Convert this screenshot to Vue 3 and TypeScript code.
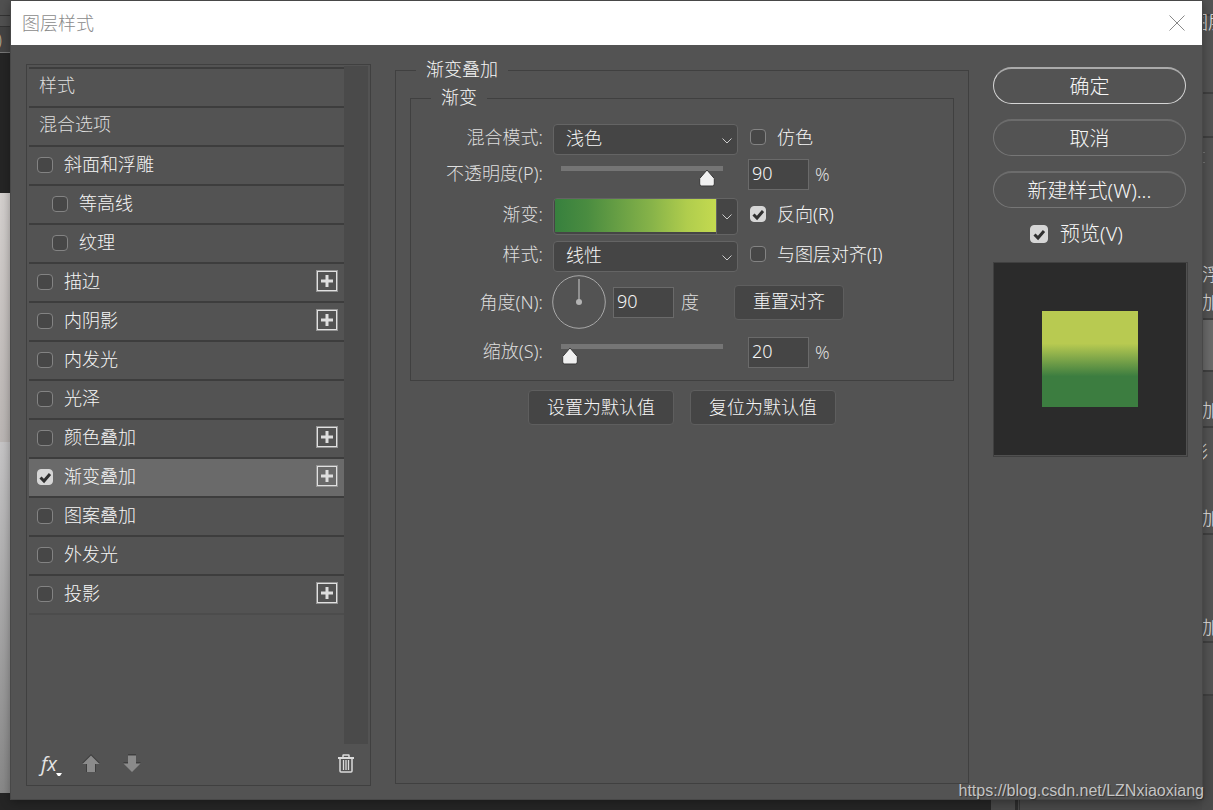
<script setup lang="ts">
import { ref } from 'vue'

interface Effect {
  name: string
  checked: boolean
  indent?: boolean
  addable?: boolean
  active?: boolean
}

const effects = ref<Effect[]>([
  { name: '斜面和浮雕', checked: false },
  { name: '等高线', checked: false, indent: true },
  { name: '纹理', checked: false, indent: true },
  { name: '描边', checked: false, addable: true },
  { name: '内阴影', checked: false, addable: true },
  { name: '内发光', checked: false },
  { name: '光泽', checked: false },
  { name: '颜色叠加', checked: false, addable: true },
  { name: '渐变叠加', checked: true, addable: true, active: true },
  { name: '图案叠加', checked: false },
  { name: '外发光', checked: false },
  { name: '投影', checked: false, addable: true },
])

const blendMode = ref('浅色')
const gradientStyle = ref('线性')
const opacity = ref(90)
const angle = ref(90)
const scale = ref(20)
const dither = ref(false)
const reverse = ref(true)
const align = ref(false)
const preview = ref(true)
</script>

<template>
  <div class="stage">
    <div class="workspace" aria-hidden="true">
      <div class="canvas-side">
        <div class="bar"></div>
        <div class="options"></div>
        <div class="tab">)</div>
        <div class="pasteboard"></div>
        <div class="artwork"></div>
        <div class="artwork lower"></div>
      </div>
      <div class="layers-side">
        <div class="strip head"></div>
        <div class="strip tabs"><span>图层</span></div>
        <div class="strip filter"></div>
        <div class="strip mode"><i></i></div>
        <div class="strip first"><span>浮</span><span>加</span></div>
        <div class="strip chosen"></div>
        <div class="strip one"><span>加</span></div>
        <div class="strip two"><span class="cut">影</span><span>加</span></div>
        <div class="strip three"><span>加</span></div>
        <div class="strip four"></div>
      </div>
      <div class="dock"></div>
    </div>

    <main class="dialog">
      <header class="titlebar">
        <h1>图层样式</h1>
        <button class="close" type="button" aria-label="关闭">
          <svg viewBox="0 0 16 16" width="16" height="16"><path d="M.5.5l15 15M15.5.5l-15 15" /></svg>
        </button>
      </header>

      <div class="body">
        <section class="styles">
          <div class="scroller">
            <ul class="list">
              <li class="row heading">样式</li>
              <li class="row heading">混合选项</li>
              <li
                v-for="(e, i) in effects"
                :key="e.name"
                class="row"
                :class="{ indent: e.indent, active: e.active }"
              >
                <input :id="'effect-' + i" v-model="e.checked" type="checkbox" />
                <label :for="'effect-' + i">{{ e.name }}</label>
                <button v-if="e.addable" class="add" type="button" :aria-label="'添加' + e.name">
                  <svg viewBox="0 0 22 22" width="22" height="22">
                    <rect x=".5" y=".5" width="21" height="21" stroke="#939393" fill="none" />
                    <rect x="1.5" y="1.5" width="19" height="19" stroke="#e0e0e0" fill="none" />
                    <path d="M9.500 5h3v4.500h4.500v3h-4.500v4.500h-3v-4.500h-4.500v-3h4.500z" fill="#dedede" />
                  </svg>
                </button>
              </li>
            </ul>
            <div class="scrollbar"></div>
          </div>
          <footer class="tools">
            <button class="fx" type="button" aria-label="效果">
              <em>fx</em>
              <svg viewBox="0 0 6 3" width="6" height="3"><path d="M0 0h6L4 3H2z" fill="#fff" /></svg>
            </button>
            <button type="button" aria-label="上移">
              <svg viewBox="0 0 18 19" width="18" height="19">
                <path d="M9 0l9 9h-4v9H4V9H0z" fill="#3e3e3e" />
                <path d="M9 1.500l8.500 8.500H13v8H5v-8H.5z" fill="#8b8b8b" />
              </svg>
            </button>
            <button type="button" aria-label="下移">
              <svg viewBox="0 0 18 19" width="18" height="19">
                <path d="M5 0h8v8h5l-9 9-9-9h5z" fill="#3e3e3e" />
                <path d="M5 1.500h8V9.500h4.500L9 18 .5 9.500H5z" fill="#8b8b8b" />
              </svg>
            </button>
            <button class="trash" type="button" aria-label="删除">
              <svg viewBox="0 0 16 19" width="16" height="19" fill="none" stroke="#dcdcdc">
                <path d="M5 3V1.500q0-.5.5-.5h5q.5 0 .5.5V3" stroke-width="1.500" />
                <path d="M0 4h16" stroke-width="2" />
                <path d="M2 5v12q0 1 1 1h10q1 0 1-1V5" stroke-width="1.500" />
                <path d="M5.500 6v10M8 6v10M10.500 6v10" stroke-width="1.300" />
              </svg>
            </button>
          </footer>
        </section>

        <fieldset class="panel">
          <legend>渐变叠加</legend>
          <fieldset class="group">
            <legend>渐变</legend>

            <div class="line select-line raised">
              <label class="name" for="blend">混合模式:</label>
              <select id="blend" v-model="blendMode">
                <option>浅色</option>
                <option>正常</option>
              </select>
              <div class="check">
                <input id="dither" v-model="dither" type="checkbox" /><label for="dither">仿色</label>
              </div>
            </div>

            <div class="line opacity-line">
              <label class="name" for="opacity">不透明度(P):</label>
              <input v-model.number="opacity" class="slider" type="range" min="0" max="100" aria-label="不透明度" />
              <div class="value">
                <input id="opacity" v-model.number="opacity" class="number" type="text" /><span>%</span>
              </div>
            </div>

            <div class="line gradient-line raised">
              <label class="name" for="gradient">渐变:</label>
              <div class="picker">
                <button id="gradient" class="swatch" type="button" aria-label="渐变"></button>
                <button class="drop" type="button" aria-label="渐变列表">
                  <svg viewBox="0 0 10 6" width="10" height="6"><path d="M.5.5L5 5 9.500.5" /></svg>
                </button>
              </div>
              <div class="check">
                <input id="reverse" v-model="reverse" type="checkbox" /><label for="reverse">反向(R)</label>
              </div>
            </div>

            <div class="line select-line raised">
              <label class="name" for="style">样式:</label>
              <select id="style" v-model="gradientStyle">
                <option>线性</option>
                <option>径向</option>
              </select>
              <div class="check">
                <input id="align" v-model="align" type="checkbox" /><label for="align">与图层对齐(I)</label>
              </div>
            </div>

            <div class="line angle-line">
              <label class="name" for="angle">角度(N):</label>
              <div class="angle">
                <svg class="dial" viewBox="0 0 54 54" width="54" height="54">
                  <circle cx="27" cy="27" r="26.300" fill="none" stroke="#a8a8a8" />
                  <path d="M27 27V4" stroke="#909090" stroke-width="2" :transform="`rotate(${90 - angle} 27 27)`" />
                  <circle cx="27" cy="27" r="3" fill="#b4b4b4" />
                </svg>
                <input id="angle" v-model.number="angle" class="number" type="text" />
                <span>度</span>
                <button class="btn" type="button">重置对齐</button>
              </div>
            </div>

            <div class="line scale-line">
              <label class="name" for="scale">缩放(S):</label>
              <input v-model.number="scale" class="slider" type="range" min="10" max="200" aria-label="缩放" />
              <div class="value">
                <input id="scale" v-model.number="scale" class="number" type="text" /><span>%</span>
              </div>
            </div>
          </fieldset>

          <div class="defaults">
            <button class="btn" type="button">设置为默认值</button>
            <button class="btn" type="button">复位为默认值</button>
          </div>
        </fieldset>

        <aside class="actions">
          <button class="pill primary" type="button">确定</button>
          <button class="pill" type="button">取消</button>
          <button class="pill" type="button">新建样式(W)...</button>
          <div class="preview-check">
            <input id="preview" v-model="preview" type="checkbox" /><label for="preview">预览(V)</label>
          </div>
          <div class="preview"><div class="sample"></div></div>
        </aside>
      </div>
    </main>

    <div class="credit">https://blog.csdn.net/LZNxiaoxiang</div>
  </div>
</template>

<style>
body {
  margin: 0;
}
</style>

<style scoped>
.stage {
  position: relative;
  display: flex;
  flex-direction: column;
  box-sizing: border-box;
  min-height: 100vh;
  padding: 1px 11px 11px;
  overflow: hidden;
  background: #252525;
  color: #dedede;
  font: 300 18px/20px "Noto Sans", "Noto Sans CJK SC", sans-serif;
}
button, input, select {
  box-sizing: border-box;
  margin: 0;
  padding: 0;
  border: 0;
  background: none;
  color: inherit;
  font: inherit;
}
svg { display: block; }
label { white-space: nowrap; }

/* application behind the dialog */
.workspace { position: absolute; inset: 0; }
.canvas-side {
  position: absolute;
  inset: 0 auto 17px 0;
  display: flex;
  flex-direction: column;
  width: 11px;
  overflow: hidden;
}
.bar { height: 15px; background: #505050; border-bottom: 1px solid #333; }
.options { height: 10px; background: #505050; border-bottom: 1px solid #333; }
.tab {
  height: 25px;
  background: #434343;
  border-bottom: 1px solid #777;
  color: #b5a68c;
  line-height: 25px;
  text-indent: -3px;
}
.pasteboard { height: 140px; background: #252525; }
.artwork { flex: 249; background: linear-gradient(#d4d0ce, #bbb6b4); }
.artwork.lower { flex: 351; background: linear-gradient(#c6c5c6, #888); }
.layers-side {
  position: absolute;
  inset: 0 0 0 auto;
  display: flex;
  flex-direction: column;
  width: 11px;
  overflow: hidden;
  background: #4a4a4a;
}
.strip {
  display: flex;
  flex-direction: column;
  box-sizing: border-box;
  background: #535353;
  border-bottom: 2px solid #404040;
  color: #e8e8e8;
  white-space: nowrap;
}
.strip .cut { margin-left: -12px; }
.head { height: 16px; }
.tabs { height: 78px; }
.tabs span { margin: -4px 0 0 -12px; }
.filter { height: 44px; }
.mode { height: 117px; border-color: #535353; }
.mode i { width: 3px; height: 9px; margin-top: 14px; border: solid #777; border-width: 1px 0; }
.first { height: 65px; padding-top: 9px; gap: 8px; }
.chosen { height: 52px; background: #6a6a6a; }
.one { height: 56px; padding-top: 28px; }
.two { height: 107px; padding-top: 14px; gap: 46px; }
.three { height: 108px; padding-top: 82px; }
.four { height: 53px; }
.dock {
  position: absolute;
  right: 11px;
  bottom: 0;
  width: 211px;
  height: 11px;
  background: linear-gradient(90deg, #484848 24px, #2c2c2c 24px, #2c2c2c 27px, #484848 27px, #484848 28px, #333 28px, #333 29px, #484848 29px);
}

/* dialog */
.dialog {
  position: relative;
  display: flex;
  flex: 1;
  flex-direction: column;
  background: #535353;
  box-shadow: 0 0 0 1px #484848, 0 2px 10px rgba(0, 0, 0, 0.4);
}
.titlebar {
  display: flex;
  align-items: center;
  justify-content: space-between;
  height: 44px;
  padding: 0 17px 0 11px;
  background: #fff;
  color: #8a8a8a;
}
h1 { margin: 0; font-size: 18px; font-weight: 300; }
.close svg { stroke: #888; fill: none; }
.body {
  display: grid;
  flex: 1;
  grid-template-columns: 345px minmax(540px, 1fr) 195px;
  gap: 24px;
  padding: 19px 14px 13px 15px;
}

/* effect list */
.styles {
  display: flex;
  flex-direction: column;
  border: 1px solid #404040;
}
.scroller { display: flex; flex: 1; padding: 1px 2px 0; }
.list { flex: 1; margin: 1px 0 0; padding: 0; list-style: none; }
.row {
  display: flex;
  align-items: center;
  box-sizing: border-box;
  height: 39px;
  padding: 0 6px 2px 8px;
  border-top: 2px solid #3d3d3d;
  color: #f6f6f6;
}
.row:last-child { height: 41px; border-bottom: 2px solid #4c4c4c; }
.row label { flex: 1; padding: 0 0 2px 11px; }
.heading { padding: 0 0 6px 10px; color: #dedede; }
.indent { padding-left: 23px; }
.active { background: #6a6a6a; }
.add { margin-bottom: 2px; }
.scrollbar { width: 24px; background: #4a4a4a; }
.tools {
  display: flex;
  align-items: center;
  gap: 23px;
  box-sizing: border-box;
  height: 41px;
  padding: 0 16px 2px 14px;
}
.fx { display: flex; align-items: flex-end; width: 24px; margin-right: -6px; }
.fx em { color: #e4e4e4; font: italic 400 20px/24px "Open Sans", sans-serif; }
.fx svg { flex: none; margin-left: -1px; }
.trash { margin-left: auto; }

input[type="checkbox"] {
  flex: none;
  width: 16px;
  height: 16px;
  border: 1px solid #838383;
  border-radius: 4px;
  background: #474747;
  appearance: none;
}
input[type="checkbox"]:checked {
  border-color: #d6d6d6;
  background: #d6d6d6 url("data:image/svg+xml,%3Csvg xmlns='http://www.w3.org/2000/svg' viewBox='0 0 16 16'%3E%3Cpath d='M3.500 8.500l3.500 3.500 6-7' fill='none' stroke='%23303030' stroke-width='3'/%3E%3C/svg%3E") center / 16px 16px no-repeat;
}

/* options */
fieldset { min-width: 0; margin: 0; border: 1px solid #404040; }
legend { height: 12px; padding: 0 10px; line-height: 10px; color: #f6f6f6; }
.panel { margin-bottom: 2px; padding: 16px 14px 0; }
.panel > legend { margin-left: 6px; }
.group { padding: 19px 0 8px; }
.group > legend { margin-left: 20px; }
.line {
  display: grid;
  grid-template-columns: 132px 185px 1fr;
  align-items: center;
  column-gap: 10px;
}
.select-line { height: 33px; }
.opacity-line { height: 37px; }
.gradient-line { height: 47px; }
.angle-line { height: 60px; }
.scale-line { height: 39px; }
.name { padding-bottom: 3px; text-align: right; }
.raised .name, .raised .check { padding-bottom: 6px; }
select {
  height: 31px;
  padding: 0 0 3px 12px;
  border: 1px solid #646464;
  border-radius: 4px;
  background: #454545 url("data:image/svg+xml,%3Csvg xmlns='http://www.w3.org/2000/svg' viewBox='0 0 10 6'%3E%3Cpath d='M.5.5L5 5 9.500.5' fill='none' stroke='%23ccc'/%3E%3C/svg%3E") right 5px top 13px / 10px 6px no-repeat;
  color: #f6f6f6;
  appearance: none;
}
.check { display: flex; align-items: center; padding-left: 2px; color: #f6f6f6; }
.check label { padding-left: 11px; }
.value, .angle { display: flex; align-items: center; }
.value span { padding: 0 0 2px 6px; }
.number {
  width: 61px;
  height: 31px;
  padding: 0 3px 3px;
  border: 1px solid #6a6a6a;
  background: #454545;
  color: #f6f6f6;
}
.slider { width: 178px; height: 18px; appearance: none; }
.slider::-webkit-slider-runnable-track {
  height: 18px;
  background: linear-gradient(#757575, #757575) 8px 0 / calc(100% - 16px) 5px no-repeat;
}
.slider::-webkit-slider-thumb {
  width: 16px;
  height: 18px;
  margin-top: 3px;
  background: url("data:image/svg+xml,%3Csvg xmlns='http://www.w3.org/2000/svg' viewBox='0 0 16 18'%3E%3Cpath d='M8 1L.7 9.500V15q0 2 2 2h10.600q2 0 2-2V9.500z' fill='%23f0f0f0' stroke='%23383838'/%3E%3C/svg%3E") center / 16px 18px no-repeat;
  appearance: none;
}
.picker {
  display: flex;
  box-sizing: border-box;
  height: 37px;
  border: 1px solid #646464;
  border-radius: 4px;
  background: #454545;
}
.swatch {
  flex: 1;
  margin: 0 0 2px 1px;
  background: linear-gradient(90deg, #37803e, #4a8c40 20%, #87b349 60%, #b0cd4d 82%, #c4da50);
}
.drop { display: flex; align-items: center; justify-content: center; width: 21px; border-left: 1px solid #646464; }
.drop svg { fill: none; stroke: #ccc; }
.angle { grid-column: 2 / 4; margin: 0 0 2px -1px; }
.dial { margin-right: 7px; }
.angle span { width: 53px; padding-left: 7px; }
.btn {
  height: 35px;
  padding: 0 18px 2px;
  border: 1px solid #5e5e5e;
  border-radius: 4px;
  background: #454545;
  color: #f6f6f6;
  white-space: nowrap;
}
.defaults { display: flex; justify-content: center; gap: 16px; margin-top: 9px; }

/* actions */
.actions { display: flex; flex-direction: column; padding-top: 3px; color: #f6f6f6; font-size: 20px; }
.pill {
  height: 37px;
  margin: 0 2px 15px 0;
  padding-top: 2px;
  border: 1px solid #767676;
  border-top: 2px solid #6c6c6c;
  border-radius: 19px;
}
.primary { border-color: #aaa #d5d5d5 #d5d5d5; }
.preview-check { display: flex; align-items: center; justify-content: center; height: 22px; margin: 0 28px 17px 0; }
.preview-check input { width: 18px; height: 18px; }
.preview-check label { padding-left: 12px; }
.preview {
  display: flex;
  align-items: center;
  justify-content: center;
  box-sizing: border-box;
  aspect-ratio: 1;
  padding: 0 2px 2px 0;
  border: 1px solid #404040;
  background: #2b2b2b;
  box-shadow: inset -1px -1px #505050;
}
.sample { width: 96px; height: 96px; background: linear-gradient(#b8ca51 34%, #3c7d40 68%); }

.credit {
  position: absolute;
  right: 9px;
  bottom: 9px;
  color: #c4c4c4;
  font: 16px/20px "Liberation Sans", Arial, sans-serif;
  text-shadow: 1px 1px 1px rgba(0, 0, 0, 0.4);
}
</style>
